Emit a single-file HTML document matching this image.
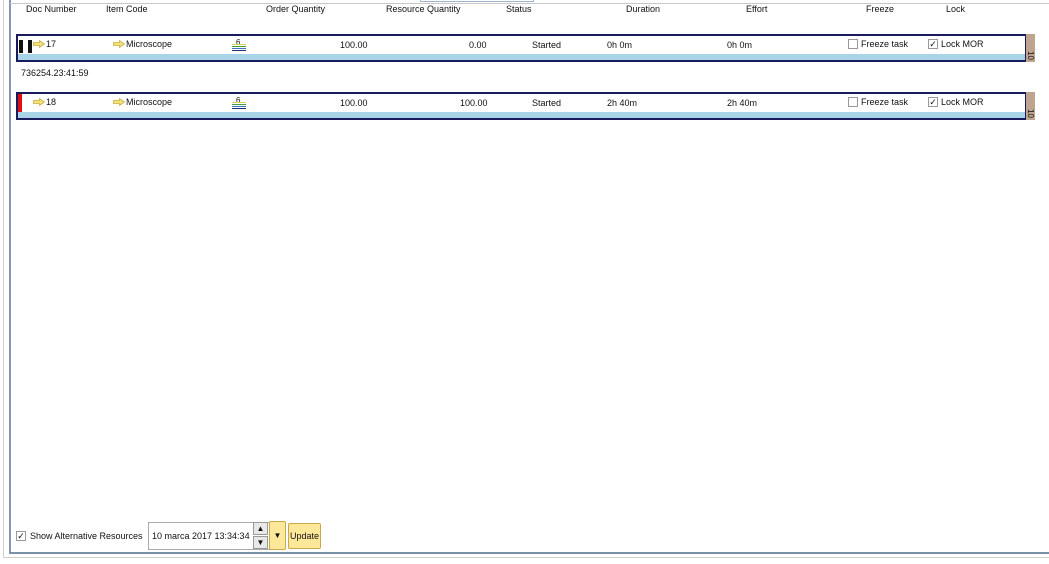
<!DOCTYPE html>
<html><head><style>
*{margin:0;padding:0;box-sizing:border-box}
body{width:1049px;height:564px;background:#fff;font-family:"Liberation Sans",sans-serif;font-size:9px;color:#111;position:relative;overflow:hidden}
.a{position:absolute;white-space:nowrap}
.row{position:absolute;left:16px;width:1011px;height:28px;border:2px solid #1a1a5e;background:#fff}
.row .bar{position:absolute;left:0;right:0;bottom:0;height:6px;background:#a9d3e6}
.tab{position:absolute;left:1026px;width:9px;height:28px;background:#bfa58f}
.tab span{position:absolute;bottom:2px;left:0;font-size:8px;transform:rotate(90deg);transform-origin:center;width:9px;text-align:center}
.arrow{display:inline-block;width:12px;height:8px;vertical-align:-1px;margin-right:1px}
.cb{position:absolute;width:10px;height:10px;border:1px solid #999;background:#fff;font-size:9px;line-height:8px;text-align:center}
</style></head><body>
<div class="a" style="left:3px;top:0;width:1px;height:558px;background:#cfcfcf"></div>
<div class="a" style="left:9px;top:0;width:2px;height:554px;background:#8796ad"></div>
<div class="a" style="left:10px;top:3px;width:1039px;height:1px;background:#c8c8c8"></div>
<div class="a" style="left:420px;top:0;width:114px;height:2px;border:1px solid #9fb4cf;border-top:none"></div>
<div class="a" style="left:9px;top:552px;width:1040px;height:2px;background:#7a8fa8"></div>
<div class="a" style="left:3px;top:557px;width:1046px;height:1px;background:#cfcfcf"></div>

<div class="a" style="left:26px;top:4px">Doc Number</div>
<div class="a" style="left:106px;top:4px">Item Code</div>
<div class="a" style="left:266px;top:4px">Order Quantity</div>
<div class="a" style="left:386px;top:4px">Resource Quantity</div>
<div class="a" style="left:506px;top:4px">Status</div>
<div class="a" style="left:626px;top:4px">Duration</div>
<div class="a" style="left:746px;top:4px">Effort</div>
<div class="a" style="left:866px;top:4px">Freeze</div>
<div class="a" style="left:946px;top:4px">Lock</div>

<svg width="0" height="0" style="position:absolute"><defs><symbol id="ar" viewBox="0 0 12 8"><path d="M0.5 2.5H6.5V0.5L11.5 4L6.5 7.5V5.5H0.5Z" fill="#f2e07a" stroke="#c9b040" stroke-width="0.8"/></symbol>
<symbol id="st" viewBox="0 0 16 14"><text x="5" y="7" font-size="8" font-family="Liberation Sans" fill="#111">6</text><rect x="1" y="6" width="14" height="1" fill="#d8d850"/><rect x="1" y="8" width="14" height="1" fill="#40a040"/><rect x="1" y="10" width="14" height="1" fill="#4070c0"/><rect x="1" y="12" width="14" height="1" fill="#203070"/></symbol></defs></svg>

<div class="row" style="top:34px"><div class="bar"></div></div>
<div class="tab" style="top:34px"><span>10</span></div>
<div class="a" style="left:19px;top:40px;width:4px;height:13px;background:#111"></div>
<div class="a" style="left:28px;top:40px;width:4px;height:13px;background:#111"></div>
<div class="a" style="left:33px;top:39px"><svg class="arrow"><use href="#ar"/></svg>17</div>
<div class="a" style="left:113px;top:39px"><svg class="arrow"><use href="#ar"/></svg>Microscope</div>
<svg class="a" style="left:231px;top:38px" width="16" height="14"><use href="#st"/></svg>
<div class="a" style="left:340px;top:40px">100.00</div>
<div class="a" style="left:469px;top:40px">0.00</div>
<div class="a" style="left:532px;top:40px">Started</div>
<div class="a" style="left:607px;top:40px">0h 0m</div>
<div class="a" style="left:727px;top:40px">0h 0m</div>
<div class="cb" style="left:848px;top:39px"></div><div class="a" style="left:861px;top:39px">Freeze task</div>
<div class="cb" style="left:928px;top:39px">✓</div><div class="a" style="left:941px;top:39px">Lock MOR</div>

<div class="a" style="left:21px;top:68px">736254.23:41:59</div>

<div class="row" style="top:92px"><div class="bar"></div></div>
<div class="tab" style="top:92px"><span>10</span></div>
<div class="a" style="left:18px;top:94px;width:4px;height:18px;background:#e01010"></div>
<div class="a" style="left:33px;top:97px"><svg class="arrow"><use href="#ar"/></svg>18</div>
<div class="a" style="left:113px;top:97px"><svg class="arrow"><use href="#ar"/></svg>Microscope</div>
<svg class="a" style="left:231px;top:96px" width="16" height="14"><use href="#st"/></svg>
<div class="a" style="left:340px;top:98px">100.00</div>
<div class="a" style="left:460px;top:98px">100.00</div>
<div class="a" style="left:532px;top:98px">Started</div>
<div class="a" style="left:607px;top:98px">2h 40m</div>
<div class="a" style="left:727px;top:98px">2h 40m</div>
<div class="cb" style="left:848px;top:97px"></div><div class="a" style="left:861px;top:97px">Freeze task</div>
<div class="cb" style="left:928px;top:97px">✓</div><div class="a" style="left:941px;top:97px">Lock MOR</div>

<div class="cb" style="left:16px;top:531px">✓</div>
<div class="a" style="left:30px;top:531px">Show Alternative Resources</div>
<div class="a" style="left:148px;top:522px;width:124px;height:28px;border:1px solid #aaa;background:#fff"></div>
<div class="a" style="left:152px;top:531px">10 marca 2017 13:34:34</div>
<div class="a" style="left:253px;top:522px;width:15px;height:13px;border:1px solid #999;background:#e8e8e8;text-align:center;font-size:8px;line-height:11px">▲</div>
<div class="a" style="left:253px;top:536px;width:15px;height:13px;border:1px solid #999;background:#e8e8e8;text-align:center;font-size:8px;line-height:11px">▼</div>
<div class="a" style="left:269px;top:521px;width:17px;height:29px;border:1px solid #c9a94a;background:#fde89a;border-radius:2px;text-align:center;font-size:8px;line-height:27px">▼</div>
<div class="a" style="left:288px;top:523px;width:33px;height:26px;border:1px solid #c9a94a;background:#fde89a;border-radius:2px;text-align:center;line-height:24px">Update</div>
</body></html>
